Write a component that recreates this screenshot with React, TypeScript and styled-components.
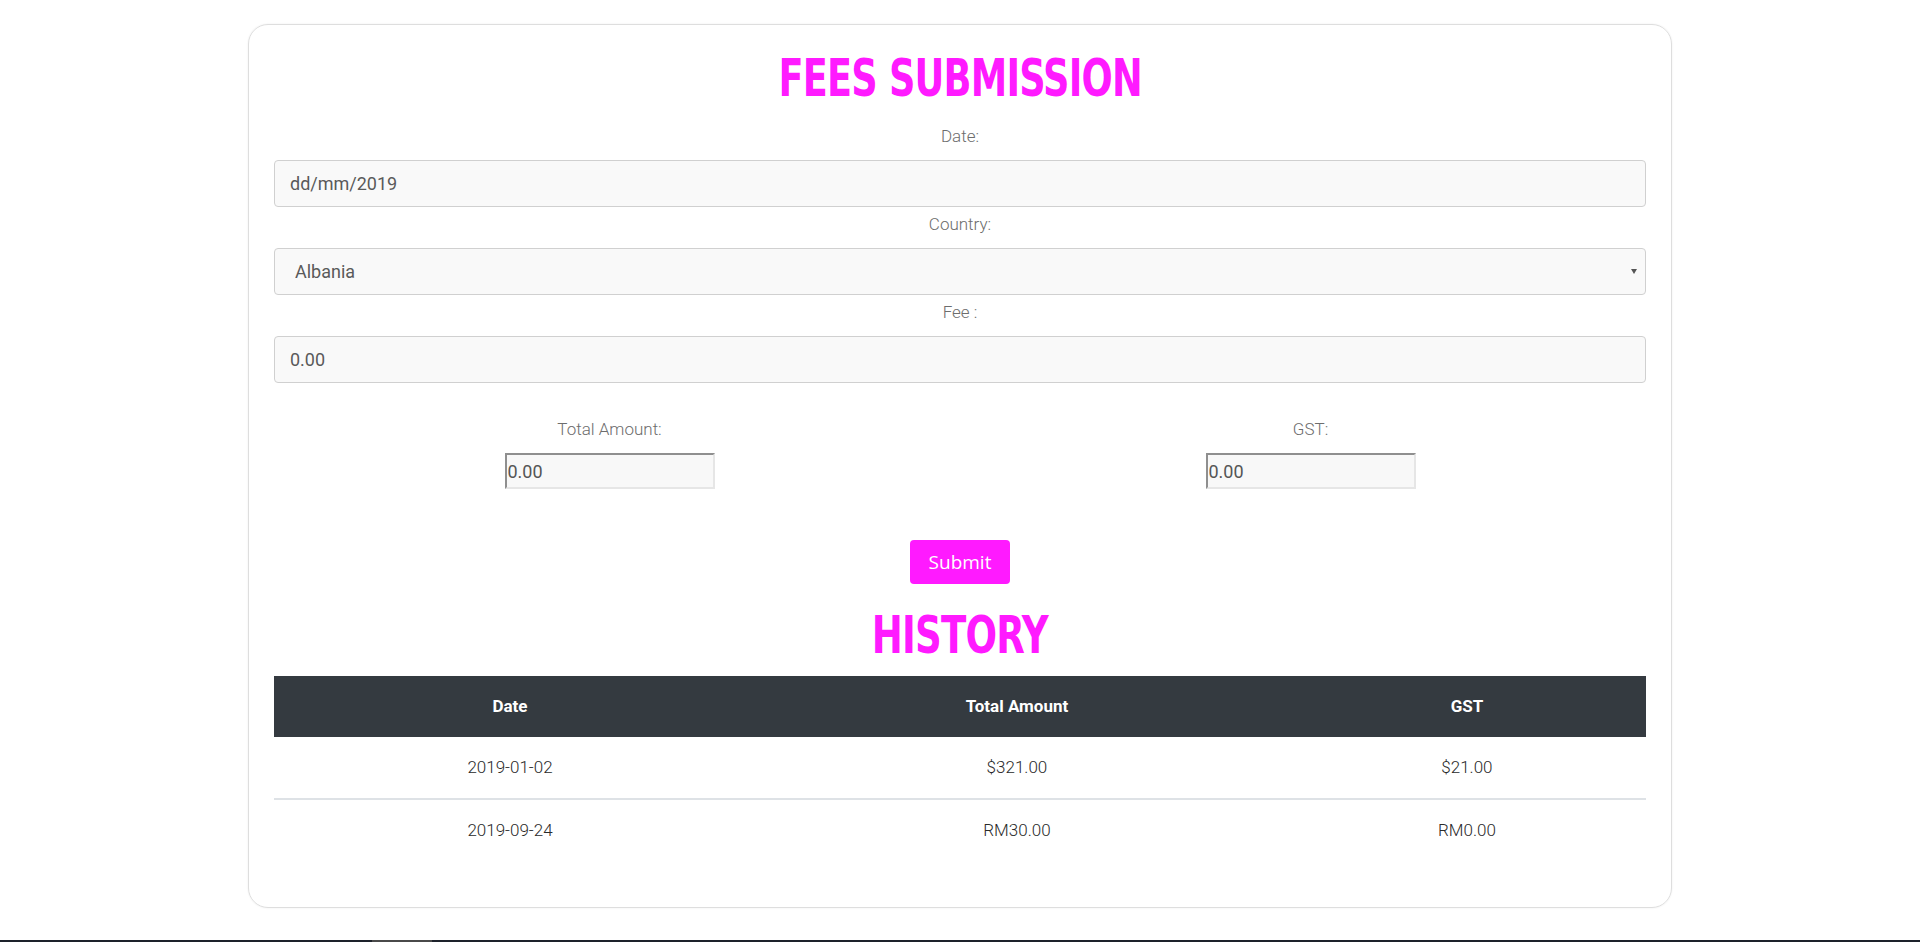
import React from "react";
import styled, { createGlobalStyle } from "styled-components";

const GlobalStyle = createGlobalStyle`
  html, body { margin: 0; padding: 0; background: #ffffff; }
  body { font-family: Roboto, "Liberation Sans", Arial, sans-serif; }
  * { box-sizing: border-box; }
`;

const MAGENTA = "#ff1aff";

const Page = styled.div`
  min-height: 100vh;
  display: flex;
  flex-direction: column;
`;

const Main = styled.main`
  flex: 1;
  padding-top: 24px;
  display: flex;
  justify-content: center;
  align-items: flex-start;
`;

const TaskStrip = styled.div`
  height: 2px;
  background: #1d222b;
  display: flex;
`;

const StripSegment = styled.div`
  margin-left: 372px;
  width: 60px;
  background: #4a4a4a;
`;

const Card = styled.section`
  width: 1424px;
  border: 1px solid #dedede;
  border-radius: 20px;
  box-shadow: 0 0 2px rgba(0, 0, 0, 0.08);
  padding: 24px 25px 46px;
  display: flex;
  flex-direction: column;
`;

const Heading = styled.h1`
  margin: 0;
  font-family: "DejaVu Sans Condensed", "Liberation Sans", sans-serif;
  font-stretch: condensed;
  font-weight: 700;
  font-size: 51px;
  line-height: 60px;
  letter-spacing: -1px;
  color: ${MAGENTA};
  text-align: center;
`;

const HeadingText = styled.span<{ $scale: number }>`
  display: inline-block;
  transform: scaleX(${(p) => p.$scale});
  transform-origin: center;
`;

const Field = styled.div`
  display: flex;
  flex-direction: column;
`;

const Label = styled.label<{ $top?: number }>`
  display: block;
  margin: ${(p) => p.$top ?? 5}px 0 12px;
  font-family: Roboto, sans-serif;
  font-weight: 300;
  font-size: 17px;
  line-height: 24px;
  color: #6d6d6d;
  text-align: center;
`;

const TextInput = styled.input`
  width: 100%;
  height: 47px;
  border: 1px solid #d0d0d0;
  border-radius: 4px;
  background: #f9f9f9;
  padding: 0 15px;
  font-family: Roboto, sans-serif;
  font-size: 18px;
  color: #5a5a5a;
  outline: none;
`;

const SelectWrap = styled.div`
  position: relative;
  &::after {
    content: "";
    position: absolute;
    right: 9px;
    top: 21px;
    border-left: 3.5px solid transparent;
    border-right: 3.5px solid transparent;
    border-top: 5px solid #555;
    pointer-events: none;
  }
`;

const Select = styled.select`
  width: 100%;
  height: 47px;
  appearance: none;
  -webkit-appearance: none;
  border: 1px solid #d0d0d0;
  border-radius: 4px;
  background: #f9f9f9;
  padding: 0 16px 0 20px;
  font-family: Roboto, sans-serif;
  font-size: 18px;
  color: #5a5a5a;
  outline: none;
`;

const SplitRow = styled.div`
  display: grid;
  grid-template-columns: 1fr 1fr;
  margin: 0 -15px;
  padding-top: 29px;
`;

const SplitCol = styled.div`
  padding: 0 15px;
  display: flex;
  flex-direction: column;
  align-items: center;
`;

const SmallInput = styled.input`
  width: 210px;
  height: 36px;
  background: #f8f8f8;
  border-top: 2px solid #8f8f8f;
  border-left: 2px solid #8f8f8f;
  border-right: 2px solid #e6e6e6;
  border-bottom: 2px solid #e6e6e6;
  border-radius: 0;
  padding: 0 1px;
  font-family: Roboto, sans-serif;
  font-size: 18px;
  color: #555;
  outline: none;
`;

const Actions = styled.div`
  display: flex;
  justify-content: center;
  padding-top: 51px;
  padding-bottom: 22px;
`;

const SubmitButton = styled.button`
  width: 100px;
  height: 44px;
  border: none;
  border-radius: 4px;
  background: ${MAGENTA};
  color: #ffffff;
  font-family: "Open Sans", sans-serif;
  font-size: 19px;
  cursor: pointer;
`;

const Table = styled.table`
  width: 100%;
  margin-top: 10px;
  border-collapse: collapse;
  table-layout: fixed;
`;

const HeadCell = styled.th`
  background: #343a40;
  color: #ffffff;
  font-family: Roboto, sans-serif;
  font-weight: 700;
  font-size: 17px;
  line-height: 25px;
  padding: 18px 12px;
  text-align: center;
`;

const BodyRow = styled.tr`
  & + & td {
    border-top: 2px solid #dee2e6;
  }
`;

const Cell = styled.td`
  font-family: Roboto, sans-serif;
  font-weight: 300;
  font-size: 17px;
  line-height: 25px;
  padding: 18px 12px;
  color: #2a2a2a;
  text-align: center;
`;

const history = [
  { date: "2019-01-02", total: "$321.00", gst: "$21.00" },
  { date: "2019-09-24", total: "RM30.00", gst: "RM0.00" },
];

export default function App() {
  return (
    <Page>
      <GlobalStyle />
      <Main>
        <Card>
          <Heading>
            <HeadingText $scale={0.8}>FEES SUBMISSION</HeadingText>
          </Heading>
          <Field>
            <Label $top={15}>Date:</Label>
            <TextInput type="text" defaultValue="dd/mm/2019" />
          </Field>
          <Field>
            <Label>Country:</Label>
            <SelectWrap>
              <Select defaultValue="Albania">
                <option>Albania</option>
                <option>Malaysia</option>
                <option>Singapore</option>
              </Select>
            </SelectWrap>
          </Field>
          <Field>
            <Label>Fee :</Label>
            <TextInput type="text" defaultValue="0.00" />
          </Field>
          <SplitRow>
            <SplitCol>
              <Label $top={5}>Total Amount:</Label>
              <SmallInput type="text" defaultValue="0.00" readOnly />
            </SplitCol>
            <SplitCol>
              <Label $top={5}>GST:</Label>
              <SmallInput type="text" defaultValue="0.00" readOnly />
            </SplitCol>
          </SplitRow>
          <Actions>
            <SubmitButton type="button">Submit</SubmitButton>
          </Actions>
          <Heading>
            <HeadingText $scale={0.81}>HISTORY</HeadingText>
          </Heading>
          <Table>
            <colgroup>
              <col style={{ width: "34.4%" }} />
              <col style={{ width: "39.5%" }} />
              <col style={{ width: "26.1%" }} />
            </colgroup>
            <thead>
              <tr>
                <HeadCell>Date</HeadCell>
                <HeadCell>Total Amount</HeadCell>
                <HeadCell>GST</HeadCell>
              </tr>
            </thead>
            <tbody>
              {history.map((h) => (
                <BodyRow key={h.date}>
                  <Cell>{h.date}</Cell>
                  <Cell>{h.total}</Cell>
                  <Cell>{h.gst}</Cell>
                </BodyRow>
              ))}
            </tbody>
          </Table>
        </Card>
      </Main>
      <TaskStrip>
        <StripSegment />
      </TaskStrip>
    </Page>
  );
}
